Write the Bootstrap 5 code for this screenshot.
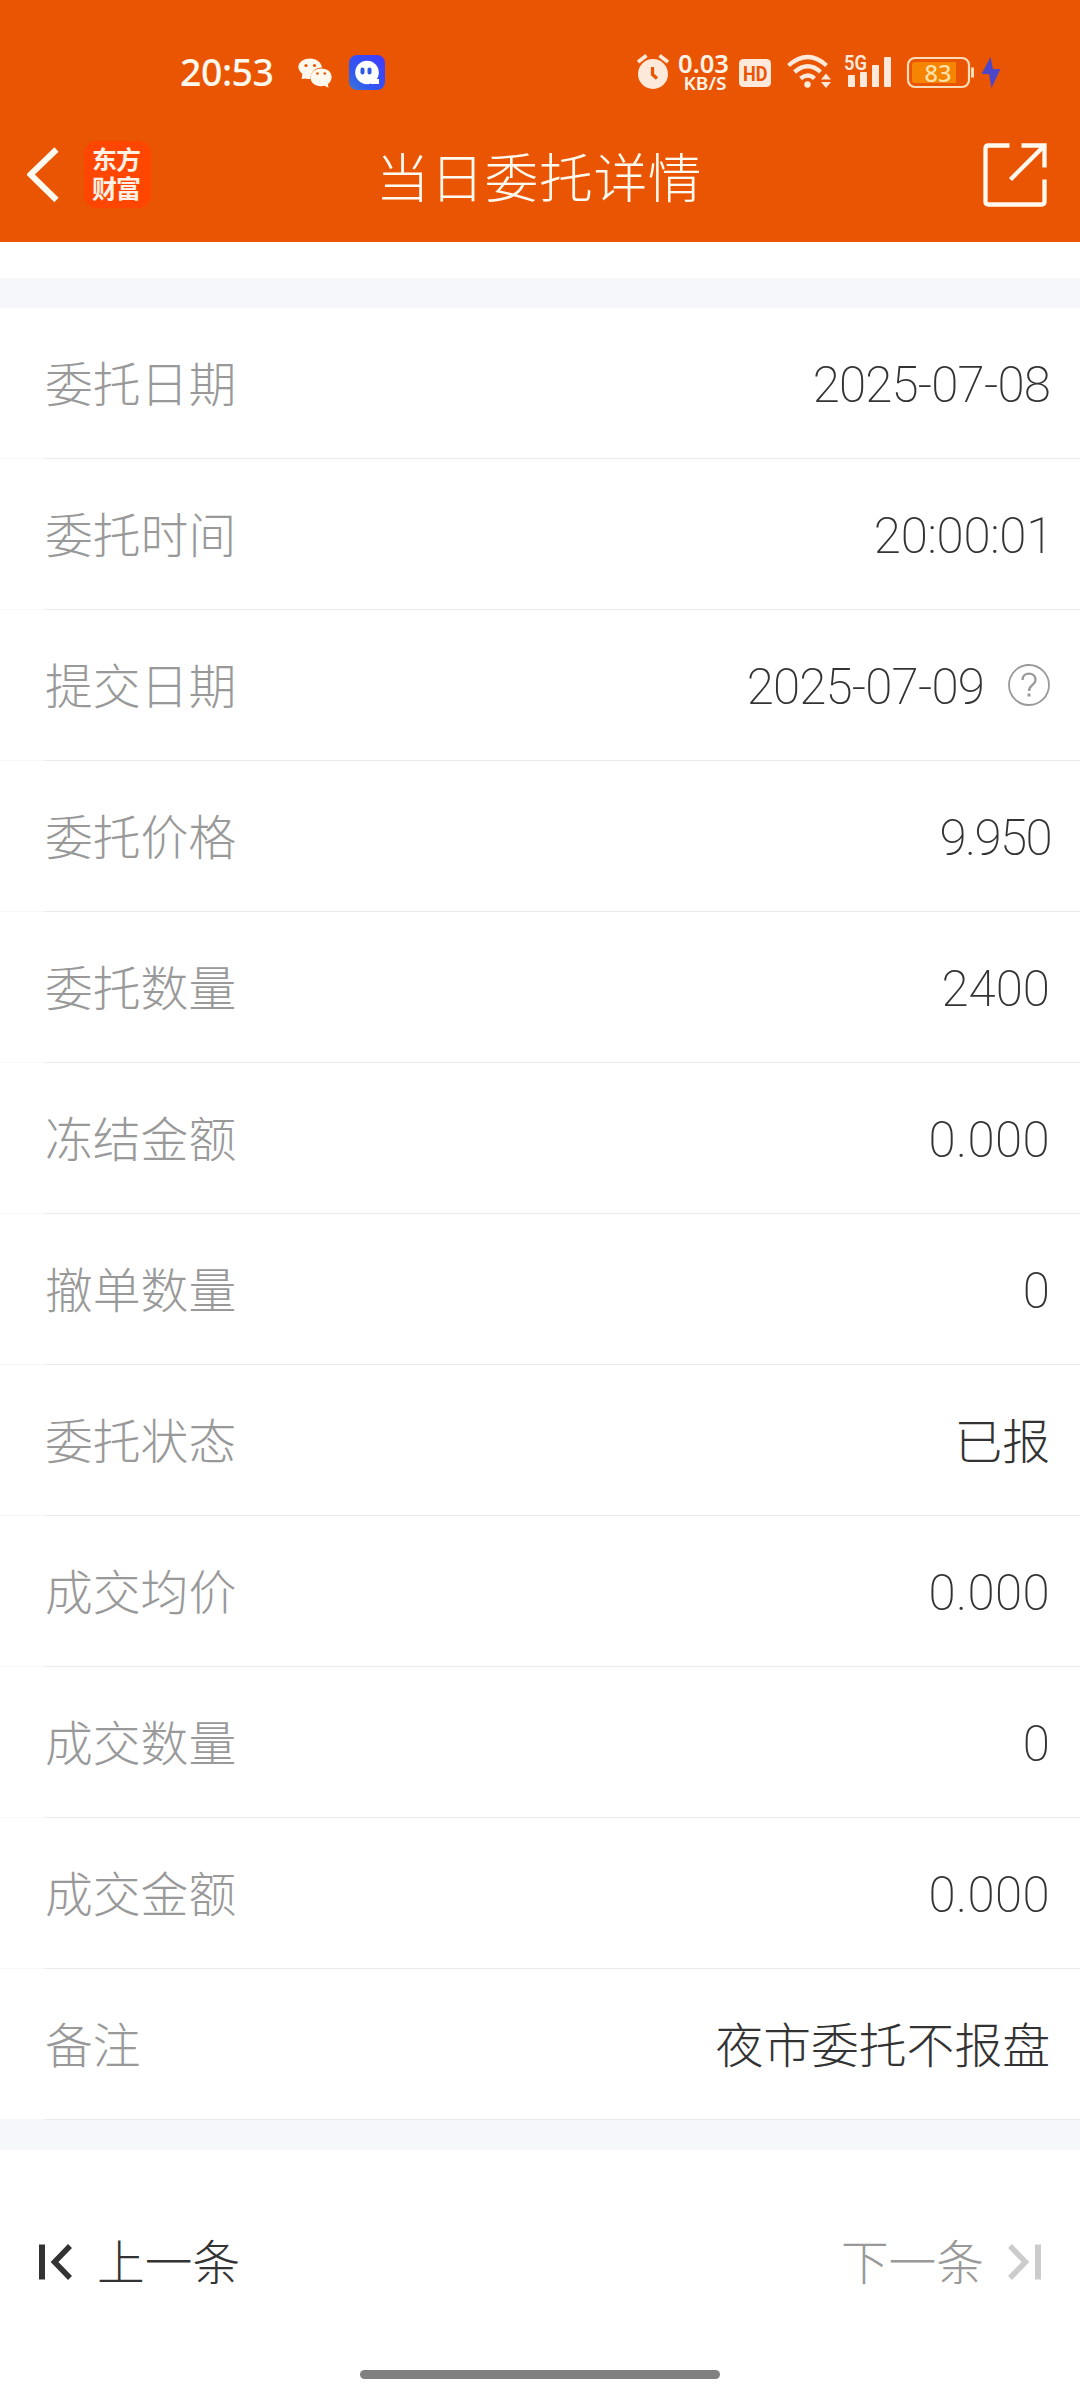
<!DOCTYPE html>
<html lang="zh-CN">
<head>
<meta charset="utf-8">
<meta name="viewport" content="width=device-width, initial-scale=1">
<title>当日委托详情</title>
<link rel="stylesheet" href="https://cdn.jsdelivr.net/npm/bootstrap@5.3.0/dist/css/bootstrap.min.css">
<style>
body{font-family:Roboto,"Noto Sans CJK SC",sans-serif;font-weight:300;color:#333;width:1080px;height:2400px;overflow:hidden;background:#fff}
svg{display:block;flex:none}
.top-area{background:#ea5504;height:242px}
.status-line{height:106px;padding:38px 80px 0 180px}
.clock{width:118px;flex:none}
.title-line{height:136px;padding:2px 33px 0 27px}
.page-title{font-size:53.8px;letter-spacing:.6px;line-height:80px;color:#fffaf0;margin:0;font-weight:300;padding:9px 0 0 4px}
.side{width:200px}
.blank-strip{height:36px}
.band{background:#f6f7fa;height:30px}
.detail-row{height:151px;padding:0 30px 0 45px;border-bottom:1px solid #f7f7f8;position:relative;font-size:47.8px;line-height:70px}
.detail-row::after{content:"";position:absolute;left:45px;right:0;bottom:-1px;height:1px;background:#ebebec}
.detail-row:last-child{border-color:#f6f7fa}
.lbl{color:#999;padding-top:6px}
.val{color:#333;padding-top:6px}
.num{font-size:49.3px;font-weight:200;padding-top:4px}
.num-date{letter-spacing:-.85px}
.num-time{letter-spacing:-.3px;margin-right:-3px}
.num-price{letter-spacing:-1.6px;margin-right:-1px}
.num-amount{letter-spacing:.4px}
.pager{height:220px;padding:4px 39px 0 39px;font-size:47.7px}
.next-icon{margin-left:22px}
.home-bar{width:360px;height:9px;border-radius:5px;background:#808080}
</style>
<script src="https://cdn.jsdelivr.net/npm/bootstrap@5.3.0/dist/js/bootstrap.bundle.min.js"></script>
</head>
<body>
<header class="top-area">
  <div class="status-line d-flex align-items-start">
    <svg class="clock" width="118" height="70" viewBox="180 38 118 70"><text x="180" y="86" font-family="Noto Sans, sans-serif" font-weight="500" font-size="37.5" textLength="94" lengthAdjust="spacing" fill="#fff8ec">20:53</text></svg>
    <svg width="35" height="70" viewBox="298 38 35 70"><path d="M302.500 79l-.8 0 .6-5C293 65.500 302 58.500 310 58.500c6.500 0 11.500 4 12 9-7 0-12 5-11.500 11.500-2 .3-3.500 0-5-.5z" fill="#fff8ec"/><path d="M321 68.500c-6 0-10.500 4-10.500 9 0 6 6 9.800 14 8.300l4 2-.7-3.500c6.500-4.800 5-15.800-6.800-15.800z" fill="#fff8ec"/><g fill="#ea5504"><circle cx="306" cy="65.500" r="1.600"/><circle cx="314.500" cy="65.500" r="1.600"/><circle cx="317.500" cy="73.500" r="1.300"/><circle cx="324.800" cy="73.500" r="1.300"/></g></svg>
    <svg width="54" height="70" viewBox="333 38 54 70"><defs><linearGradient id="ga" x1="0" y1="1" x2="1" y2="0"><stop offset="0" stop-color="#3f78cf"/><stop offset=".3" stop-color="#2f5af0"/><stop offset="1" stop-color="#4338ff"/></linearGradient></defs><rect x="349" y="55" width="36" height="35" rx="8" fill="url(#ga)"/><circle cx="367" cy="72.500" r="11.800" fill="#fff"/><path d="M371 79h8v5h-8z" fill="#fff"/><rect x="360.500" y="67.500" width="4" height="7" rx="2" fill="#3058e8"/><rect x="367.500" y="67.500" width="4" height="7" rx="2" fill="#3058e8"/></svg>
    <div class="ms-auto d-flex">
      <svg width="41" height="70" viewBox="636 38 41 70"><circle cx="653" cy="74" r="15" fill="#ffe9db"/><path d="M638 62l8.500-6.500M668 62l-8.500-6.500" stroke="#ffe9db" stroke-width="3.600"/><path d="M652.500 67v7.500l4.500 4" fill="none" stroke="#ea5504" stroke-width="3.200"/></svg>
      <svg width="60" height="70" viewBox="677 38 60 70" font-family="Noto Sans, sans-serif" font-weight="600" fill="#fff3e6"><text x="678" y="73" font-size="24.500" textLength="51" lengthAdjust="spacingAndGlyphs">0.03</text><text x="683.500" y="90" font-size="17.800" textLength="43" lengthAdjust="spacingAndGlyphs">KB/S</text></svg>
      <svg width="48" height="70" viewBox="737 38 48 70"><rect x="739" y="59" width="32" height="28" rx="4.500" fill="#ffe9db"/><text x="743" y="80.500" font-family="Roboto, sans-serif" font-weight="700" font-size="21" textLength="24.500" lengthAdjust="spacingAndGlyphs" fill="#ea5504">HD</text></svg>
      <svg width="58" height="70" viewBox="785 38 58 70" fill="none" stroke="#ffe9db" stroke-width="4.300"><path d="M788.500 65.500Q808 48.500 826.500 65.500M794.500 72Q808 60.500 820.500 72M800.500 78.500Q808 72.500 814.500 78.500"/><circle cx="807.500" cy="84.500" r="3.200" fill="#ffe9db" stroke="none"/><path d="M826 73.500l5 6h-10zM826 88l5-6h-10z" fill="#ffe9db" stroke="none"/></svg>
      <svg width="63" height="70" viewBox="843 38 63 70" fill="#ffe9db"><text x="844" y="70" font-family="Roboto, sans-serif" font-weight="600" font-size="19.500" textLength="23" lengthAdjust="spacingAndGlyphs">5G</text><rect x="848" y="75" width="7" height="12" rx="1"/><rect x="860" y="72" width="7" height="15" rx="1"/><rect x="872" y="65" width="7" height="22" rx="1"/><rect x="884" y="57" width="7" height="30" rx="1"/></svg>
      <svg width="94" height="70" viewBox="906 38 94 70"><rect x="908" y="58" width="61" height="29" rx="7" fill="none" stroke="#ffdcb8" stroke-width="2.200"/><path d="M915 62h41v21h-41q-3 0-3-3v-15q0-3 3-3z" fill="#f58400"/><path d="M972.500 67.500v10" stroke="#ffdcb8" stroke-width="3"/><text x="924.500" y="81.500" font-family="Noto Sans, sans-serif" font-size="24" font-weight="500" textLength="27" lengthAdjust="spacingAndGlyphs" fill="#ffe0aa">83</text><path d="M990.500 57l-9 17h7.500l2.500 14 9-19h-7.500z" fill="#4c46c8"/></svg>
    </div>
  </div>
  <nav class="title-line d-flex align-items-center justify-content-between">
    <div class="side d-flex align-items-center">
      <svg width="57" height="68" viewBox="27 141 57 68"><path d="M56.500 149.500L30.500 174.500L56.500 200" fill="none" stroke="#fffaf0" stroke-width="6"/></svg>
      <svg width="68" height="68" viewBox="84 141 68 68"><rect x="84" y="141" width="67" height="67" rx="13" fill="#ff4600"/><g font-family="Noto Sans CJK SC, sans-serif" font-weight="600" font-size="25" fill="#fff1e5"><text x="92" y="168.500" textLength="49">东方</text><text x="92" y="198" textLength="49">财富</text></g></svg>
    </div>
    <h1 class="page-title">当日委托详情</h1>
    <div class="side d-flex justify-content-end">
      <svg width="64" height="64" viewBox="983.500 142.500 64 64" fill="none" stroke="#fffaf0" stroke-width="4.300"><path d="M1010 145H989q-3 0-3 3v53q0 3 3 3h53q3 0 3-3v-22M1022 145h23v22M1044 146L1011 179"/></svg>
    </div>
  </nav>
</header>
<div class="blank-strip"></div>
<div class="band"></div>
<main>
  <div class="detail-row d-flex align-items-center justify-content-between"><span class="lbl">委托日期</span><span class="val num num-date">2025-07-08</span></div>
  <div class="detail-row d-flex align-items-center justify-content-between"><span class="lbl">委托时间</span><span class="val num num-time">20:00:01</span></div>
  <div class="detail-row d-flex align-items-center justify-content-between"><span class="lbl">提交日期</span><span class="d-flex align-items-center"><span class="val num num-date">2025-07-09</span><svg class="ms-4" width="42" height="42" viewBox="0 0 42 42"><circle cx="21" cy="21" r="20" fill="none" stroke="#999" stroke-width="1.800"/><path d="M14.500 16c0-8.500 13-8.500 13 0 0 5-6.500 5-6.500 11" fill="none" stroke="#999" stroke-width="2.300"/><path d="M19.500 29.500h3v3h-3z" fill="#999"/></svg></span></div>
  <div class="detail-row d-flex align-items-center justify-content-between"><span class="lbl">委托价格</span><span class="val num num-price">9.950</span></div>
  <div class="detail-row d-flex align-items-center justify-content-between"><span class="lbl">委托数量</span><span class="val num">2400</span></div>
  <div class="detail-row d-flex align-items-center justify-content-between"><span class="lbl">冻结金额</span><span class="val num num-amount">0.000</span></div>
  <div class="detail-row d-flex align-items-center justify-content-between"><span class="lbl">撤单数量</span><span class="val num">0</span></div>
  <div class="detail-row d-flex align-items-center justify-content-between"><span class="lbl">委托状态</span><span class="val">已报</span></div>
  <div class="detail-row d-flex align-items-center justify-content-between"><span class="lbl">成交均价</span><span class="val num num-amount">0.000</span></div>
  <div class="detail-row d-flex align-items-center justify-content-between"><span class="lbl">成交数量</span><span class="val num">0</span></div>
  <div class="detail-row d-flex align-items-center justify-content-between"><span class="lbl">成交金额</span><span class="val num num-amount">0.000</span></div>
  <div class="detail-row d-flex align-items-center justify-content-between"><span class="lbl">备注</span><span class="val">夜市委托不报盘</span></div>
</main>
<div class="band"></div>
<footer>
  <div class="pager d-flex align-items-center justify-content-between">
    <div class="d-flex align-items-center"><svg class="me-4" width="34" height="36" viewBox="0 0 34 36"><path d="M0 .5h6v35H0z" fill="#333"/><path d="M31 2L15.500 18L31 34" fill="none" stroke="#333" stroke-width="5.500"/></svg><span class="val">上一条</span></div>
    <div class="d-flex align-items-center"><span class="lbl">下一条</span><svg class="next-icon" width="35" height="36" viewBox="0 0 35 36"><path d="M29 .5h6v35h-6z" fill="#ccc"/><path d="M4 2L19.500 18L4 34" fill="none" stroke="#ccc" stroke-width="5.500"/></svg></div>
  </div>
  <div class="home-bar mx-auto"></div>
</footer>
</body>
</html>
